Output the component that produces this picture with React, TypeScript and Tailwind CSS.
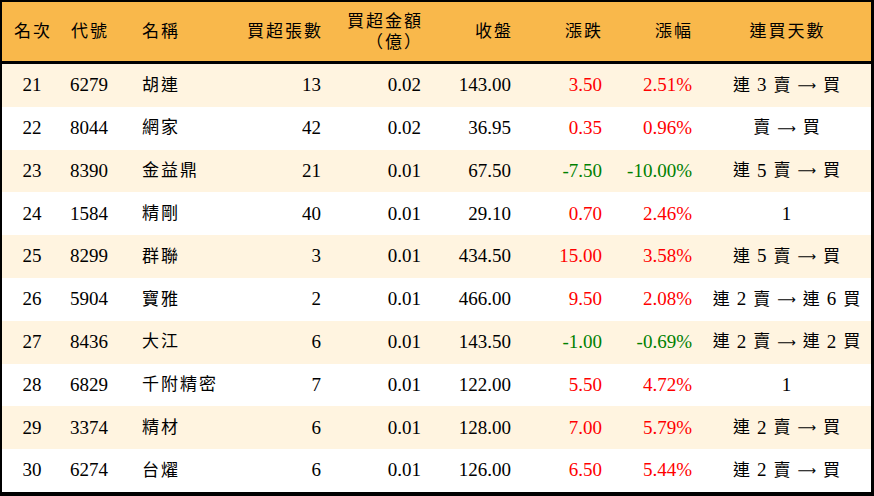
import React from "react";

type Row = {
  rank: string;
  code: string;
  name: string;
  shares: string;
  amount: string;
  close: string;
  change: string;
  pct: string;
  days: string;
};

const rows: Row[] = [
  { rank: "21", code: "6279", name: "胡連", shares: "13", amount: "0.02", close: "143.00", change: "3.50", pct: "2.51%", days: "連 3 賣 → 買" },
  { rank: "22", code: "8044", name: "網家", shares: "42", amount: "0.02", close: "36.95", change: "0.35", pct: "0.96%", days: "賣 → 買" },
  { rank: "23", code: "8390", name: "金益鼎", shares: "21", amount: "0.01", close: "67.50", change: "-7.50", pct: "-10.00%", days: "連 5 賣 → 買" },
  { rank: "24", code: "1584", name: "精剛", shares: "40", amount: "0.01", close: "29.10", change: "0.70", pct: "2.46%", days: "1" },
  { rank: "25", code: "8299", name: "群聯", shares: "3", amount: "0.01", close: "434.50", change: "15.00", pct: "3.58%", days: "連 5 賣 → 買" },
  { rank: "26", code: "5904", name: "寶雅", shares: "2", amount: "0.01", close: "466.00", change: "9.50", pct: "2.08%", days: "連 2 賣 → 連 6 買" },
  { rank: "27", code: "8436", name: "大江", shares: "6", amount: "0.01", close: "143.50", change: "-1.00", pct: "-0.69%", days: "連 2 賣 → 連 2 買" },
  { rank: "28", code: "6829", name: "千附精密", shares: "7", amount: "0.01", close: "122.00", change: "5.50", pct: "4.72%", days: "1" },
  { rank: "29", code: "3374", name: "精材", shares: "6", amount: "0.01", close: "128.00", change: "7.00", pct: "5.79%", days: "連 2 賣 → 買" },
  { rank: "30", code: "6274", name: "台燿", shares: "6", amount: "0.01", close: "126.00", change: "6.50", pct: "5.44%", days: "連 2 賣 → 買" },
];

const grid = "grid grid-cols-[60px_78px_90px_100px_100px_90px_90px_90px_171px]";
const font = "font-['Liberation_Serif','Noto_Sans_CJK_TC',serif]";

function Days({ text }: { text: string }) {
  const parts = text.split(" ");
  return (
    <div className="flex items-center justify-center gap-[7px] pl-[2px]">
      {parts.map((p, i) => {
        if (p === "→")
          return (
            <span key={i} className="font-['DejaVu_Sans',sans-serif] text-[13px] leading-none">
              ⟶
            </span>
          );
        if (/^\d+$/.test(p))
          return (
            <span key={i} className="text-[19px]">
              {p}
            </span>
          );
        return (
          <span key={i} className="text-[17px]">
            {p}
          </span>
        );
      })}
    </div>
  );
}

export default function App() {
  return (
    <div className={`w-[874px] h-[496px] bg-white border-black border-l-2 border-t-2 border-r-[3px] border-b-4 text-black ${font}`}>
      <div className={`${grid} h-[62px] bg-[#f9b84b] border-b-[3px] border-black items-center text-[17px] tracking-[2px]`}>
        <div className="text-center pl-[2px]">名次</div>
        <div className="pl-[9px]">代號</div>
        <div className="pl-[2px]">名稱</div>
        <div className="text-right pr-[7px]">買超張數</div>
        <div className="text-right pr-[7px] leading-[21px]">
          <div>買超金額</div>
          <div>（億）</div>
        </div>
        <div className="text-right pr-[7px]">收盤</div>
        <div className="text-right pr-[7px]">漲跌</div>
        <div className="text-right pr-[7px]">漲幅</div>
        <div className="text-center pl-[4px]">連買天數</div>
      </div>
      {rows.map((r, i) => {
        const neg = r.change.startsWith("-");
        const color = neg ? "text-[#008000]" : "text-[#ff0000]";
        return (
          <div
            key={r.rank}
            className={`${grid} h-[42.8px] items-center text-[19px] ${i % 2 === 0 ? "bg-[#fff4e0]" : "bg-white"}`}
          >
            <div className="text-center">{r.rank}</div>
            <div className="pl-[8px]">{r.code}</div>
            <div className="pl-[2px] text-[17px] tracking-[2px]">{r.name}</div>
            <div className="text-right pr-[9px]">{r.shares}</div>
            <div className="text-right pr-[9px]">{r.amount}</div>
            <div className="text-right pr-[9px]">{r.close}</div>
            <div className={`text-right pr-[8px] ${color}`}>{r.change}</div>
            <div className={`text-right pr-[8px] ${color}`}>{r.pct}</div>
            <Days text={r.days} />
          </div>
        );
      })}
    </div>
  );
}
